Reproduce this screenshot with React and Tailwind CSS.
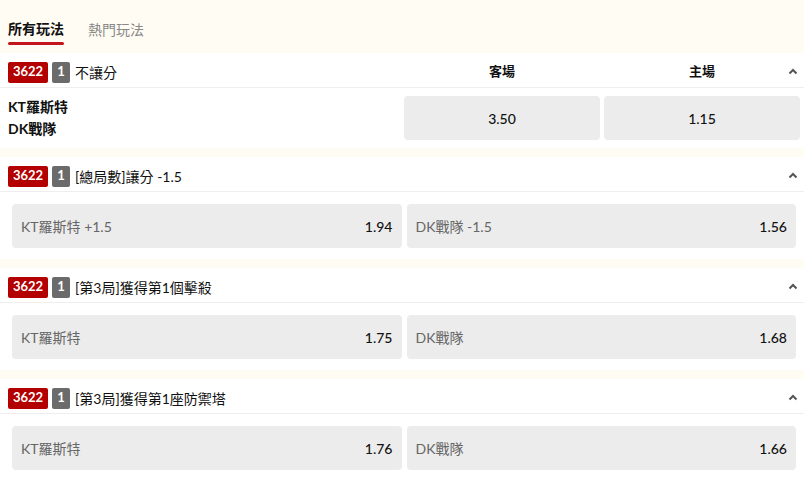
const FONT = "font-['Lato','Noto_Sans_CJK_TC',sans-serif]";

function Chevron() {
  return (
    <svg width="10" height="7" viewBox="0 0 10 7" className="text-[#555]">
      <path d="M1.5 5.5 L5 2 L8.5 5.5" fill="none" stroke="currentColor" strokeWidth="2" />
    </svg>
  );
}

function Header({ title, labels }) {
  return (
    <div className="relative flex h-[35px] items-center border-b border-[#eeeeee] pl-2 pr-1 pt-1">
      <span className="flex h-[21px] w-10 items-center justify-center rounded-[2px] bg-[#b30000] text-[13px] font-bold text-white">
        3622
      </span>
      <span className="ml-1 flex h-[21px] w-[18px] items-center justify-center rounded-[2px] bg-[#6b6b6b] text-[13px] font-bold text-white">
        1
      </span>
      <span className="ml-[5px] flex-1 text-[14px] text-[#111]">{title}</span>
      {labels && (
        <div className="grid w-[396px] grid-cols-2 gap-1 text-[13px] font-bold text-[#111]">
          {labels.map((l) => (
            <span key={l} className="text-center">
              {l}
            </span>
          ))}
        </div>
      )}
      {/* collapse toggle */}
      <span className="absolute right-[6px] top-[15px] flex">
        <Chevron />
      </span>
    </div>
  );
}

function OddsButton({ label, value }) {
  return (
    <button className="flex h-11 items-center justify-between rounded-[4px] bg-[#ececec] px-[9px] text-[14px]">
      <span className="text-[#666]">{label}</span>
      <span className="font-medium text-[#111]">{value}</span>
    </button>
  );
}

function Market({ title, rows }) {
  return (
    <section className="mt-[9px] bg-white">
      <Header title={title} />
      <div className="grid grid-cols-2 gap-[5px] pb-[11px] pl-3 pr-2 pt-3">
        {rows.map((r) => (
          <OddsButton key={r.label} label={r.label} value={r.value} />
        ))}
      </div>
    </section>
  );
}

export default function App() {
  const markets = [
    {
      title: "[總局數]讓分 -1.5",
      rows: [
        { label: "KT羅斯特 +1.5", value: "1.94" },
        { label: "DK戰隊 -1.5", value: "1.56" },
      ],
    },
    {
      title: "[第3局]獲得第1個擊殺",
      rows: [
        { label: "KT羅斯特", value: "1.75" },
        { label: "DK戰隊", value: "1.68" },
      ],
    },
    {
      title: "[第3局]獲得第1座防禦塔",
      rows: [
        { label: "KT羅斯特", value: "1.76" },
        { label: "DK戰隊", value: "1.66" },
      ],
    },
  ];

  return (
    <div className={`${FONT} h-[481px] w-[804px] overflow-hidden bg-[#fffcf3]`}>
      {/* Tabs */}
      <div className="flex h-[53px] gap-6 px-2">
        <div className="flex flex-col pt-[19px]">
          <span className="text-[14px] font-bold leading-5 text-[#111]">所有玩法</span>
          <span className="mt-[3px] h-[3px] w-full rounded-full bg-[#c4151c]"></span>
        </div>
        <div className="pt-[19px] leading-5">
          <span className="text-[14px] leading-5 text-[#888]">熱門玩法</span>
        </div>
      </div>

      {/* Main market */}
      <section className="bg-white">
        <Header title="不讓分" labels={["客場", "主場"]} />
        <div className="flex h-[60px] items-center pl-2 pr-1">
          <div className="flex-1 text-[14px] font-bold leading-[22px] text-[#111]">
            <div>KT羅斯特</div>
            <div>DK戰隊</div>
          </div>
          <div className="grid w-[396px] grid-cols-2 gap-1">
            <button className="h-11 rounded-[4px] bg-[#ececec] text-[14px] font-medium text-[#111]">3.50</button>
            <button className="h-11 rounded-[4px] bg-[#ececec] text-[14px] font-medium text-[#111]">1.15</button>
          </div>
        </div>
      </section>

      {markets.map((m) => (
        <Market key={m.title} title={m.title} rows={m.rows} />
      ))}
    </div>
  );
}
